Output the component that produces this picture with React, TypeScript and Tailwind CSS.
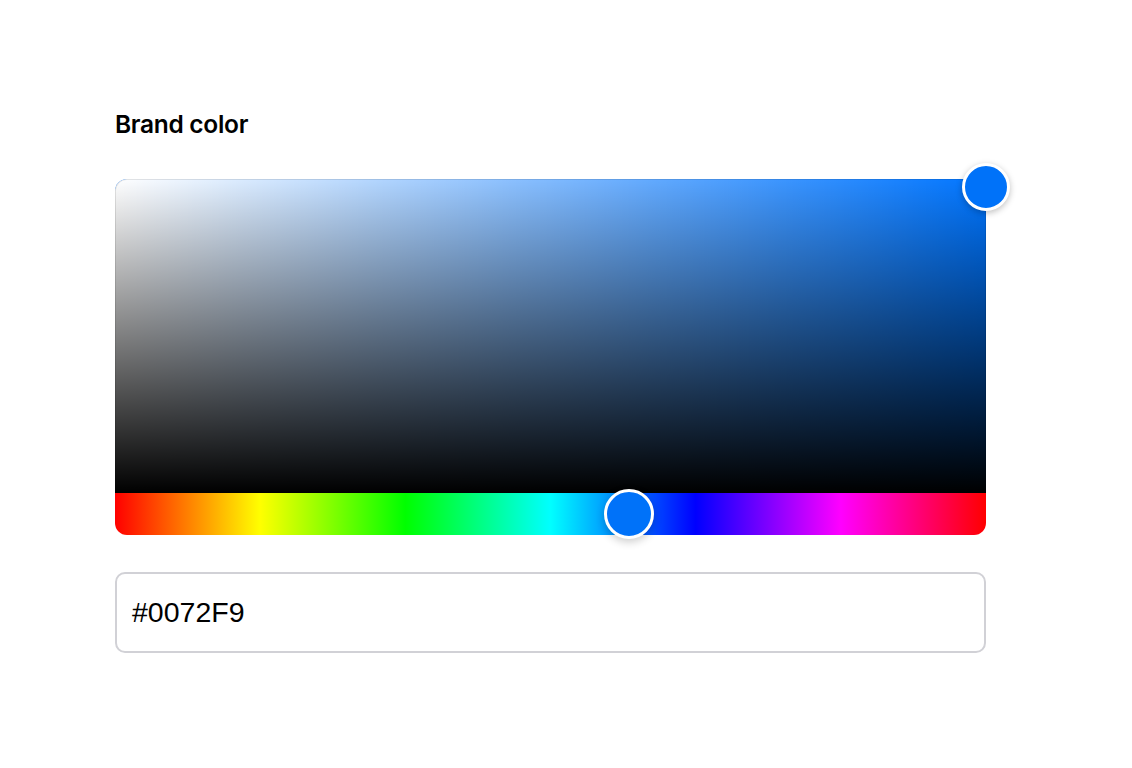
import { useState } from "react";

const App = () => {
  const [hex] = useState<string>("#0072F9");
  const hue = 212.5;
  const sat = 1;
  const val = 0.976;

  return (
    <div className="w-full h-screen bg-white pt-[110px] pl-[115px]" style={{ fontFamily: "Inter, 'Noto Sans', sans-serif" }}>
      <div className="w-[871px] flex flex-col">
        <h3 className="text-[24.5px] leading-[28px] font-semibold text-black tracking-[-0.3px]">Brand color</h3>

        <div className="mt-[41px] relative">
          <div
            className="relative h-[314px] rounded-t-xl"
            style={{ backgroundColor: `hsl(${hue}, 100%, 50%)` }}
          >
            <div className="absolute inset-0 rounded-t-xl bg-gradient-to-r from-white to-transparent" />
            <div className="absolute inset-0 rounded-t-xl bg-gradient-to-b from-transparent to-black" />
            <div className="absolute inset-0 rounded-t-xl border border-b-0 border-black/10" />
            <div
              className="absolute w-[48px] h-[48px] -ml-[24px] -mt-[24px] rounded-full border-[3px] border-white bg-[#0072F9] shadow-[0_2px_6px_rgba(0,0,0,0.25)]"
              style={{ left: `${sat * 100}%`, top: `${(1 - val) * 100}%` }}
            />
          </div>

          <div className="relative h-[42px] rounded-b-xl bg-[linear-gradient(to_right,#ff0000,#ffff00,#00ff00,#00ffff,#0000ff,#ff00ff,#ff0000)]">
            <div
              className="absolute top-1/2 w-[50px] h-[50px] -ml-[25px] -mt-[25px] rounded-full border-[3px] border-white bg-[#0072F9] shadow-[0_3px_8px_rgba(0,0,0,0.2)]"
              style={{ left: `${(hue / 360) * 100}%` }}
            />
          </div>
        </div>

        <div className="mt-[37px] h-[81px] rounded-[10px] border-2 border-[#d1d1d6] flex items-center px-[15px]">
          <span className="text-[28.5px] text-black" style={{ fontFamily: "'Liberation Sans', Arial, sans-serif" }}>
            {hex}
          </span>
        </div>
      </div>
    </div>
  );
};

export default App;
